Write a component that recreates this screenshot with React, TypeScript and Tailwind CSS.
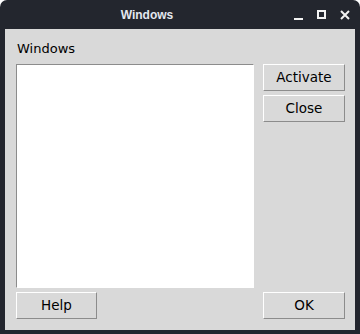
import { ReactNode } from "react";

function RaisedButton({ children, className = "" }: { children: ReactNode; className?: string }) {
    return (
        <button
            className={`flex h-[27px] items-center justify-center border border-t-white border-l-white border-r-[#8c8c8c] border-b-[#8c8c8c] bg-[#d9d9d9] text-[13.5px] text-black ${className}`}
        >
            {children}
        </button>
    );
}

export default function App() {
    return (
        <div
            className="flex h-[334px] w-[360px] flex-col rounded-t-[7px] bg-[#23262e]"
            style={{ fontFamily: '"DejaVu Sans", sans-serif' }}
        >
            {/* title bar */}
            <div className="flex h-[29px] shrink-0 items-center pr-[10px]">
                <div className="flex flex-1 justify-center pl-[8px]">
                    <span
                        className="text-[12px] font-bold text-[#e4e8f0]"
                        style={{ fontFamily: '"Liberation Sans", sans-serif' }}
                    >
                        Windows
                    </span>
                </div>
                <div className="flex items-center gap-[14px] pl-[8px]">
                    <svg width="9" height="10" viewBox="0 0 9 10">
                        <rect x="0" y="8" width="9" height="2" fill="#f2f2f2" />
                    </svg>
                    <svg width="9" height="10" viewBox="0 0 9 10">
                        <rect x="1" y="1" width="7" height="7" fill="none" stroke="#f2f2f2" strokeWidth="2" />
                    </svg>
                    <svg width="10" height="10" viewBox="0 0 10 10">
                        <path d="M1 1 L9 9 M9 1 L1 9" stroke="#f2f2f2" strokeWidth="2" />
                    </svg>
                </div>
            </div>

            {/* client area */}
            <div className="mx-[5px] mb-[4px] flex flex-1 flex-col bg-[#d9d9d9] pl-[11px] pr-[10px] pt-[11px] pb-[11px]">
                <div className="mb-[6px] pl-[1px] text-[13px] leading-[18px] text-black">Windows</div>
                <div className="flex flex-1 gap-[9px]">
                    <div className="flex-1 border border-t-[#8c8c8c] border-l-[#8c8c8c] border-r-white border-b-white bg-white" />
                    <div className="flex w-[82px] flex-col gap-[4px]">
                        <RaisedButton>Activate</RaisedButton>
                        <RaisedButton>Close</RaisedButton>
                    </div>
                </div>
                <div className="mt-[4px] flex justify-between">
                    <RaisedButton className="w-[81px]">Help</RaisedButton>
                    <RaisedButton className="w-[82px]">OK</RaisedButton>
                </div>
            </div>
        </div>
    );
}
